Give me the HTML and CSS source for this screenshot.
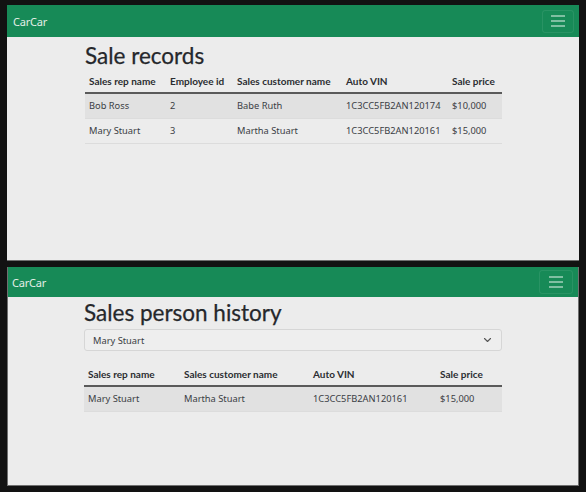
FILE: index.html
```html
<!DOCTYPE html>
<html lang="en">
<head>
<meta charset="utf-8">
<title>CarCar</title>
<link rel="stylesheet" href="styles.css">
</head>
<body>
<div class="shot shot-top">
  <nav class="navbar navbar-top">
    <span class="brand">CarCar</span>
    <button class="toggler" type="button" aria-label="Menu"><span class="bar"></span><span class="bar"></span><span class="bar"></span></button>
  </nav>
  <main class="content content-top">
    <h1 class="title">Sale records</h1>
    <table class="tbl tbl-top">
      <thead>
        <tr><th class="c1">Sales rep name</th><th class="c2">Employee id</th><th class="c3">Sales customer name</th><th class="c4">Auto VIN</th><th class="c5">Sale price</th></tr>
      </thead>
      <tbody>
        <tr class="odd"><td>Bob Ross</td><td>2</td><td>Babe Ruth</td><td>1C3CC5FB2AN120174</td><td>$10,000</td></tr>
        <tr><td>Mary Stuart</td><td>3</td><td>Martha Stuart</td><td>1C3CC5FB2AN120161</td><td>$15,000</td></tr>
      </tbody>
    </table>
  </main>
</div>
<div class="shot shot-bottom">
  <nav class="navbar navbar-bottom">
    <span class="brand">CarCar</span>
    <button class="toggler" type="button" aria-label="Menu"><span class="bar"></span><span class="bar"></span><span class="bar"></span></button>
  </nav>
  <main class="content content-bottom">
    <h1 class="title title-bottom">Sales person history</h1>
    <div class="select">
      <span>Mary Stuart</span>
      <svg class="chev" width="9" height="6" viewBox="0 0 9 6"><path d="M1.5 1.5 L4.5 4.5 L7.5 1.5" fill="none" stroke="#555" stroke-width="1.1" stroke-linecap="round" stroke-linejoin="round"/></svg>
    </div>
    <table class="tbl tbl-bottom">
      <thead>
        <tr><th class="d1">Sales rep name</th><th class="d2">Sales customer name</th><th class="d3">Auto VIN</th><th class="d4">Sale price</th></tr>
      </thead>
      <tbody>
        <tr class="odd"><td>Mary Stuart</td><td>Martha Stuart</td><td>1C3CC5FB2AN120161</td><td>$15,000</td></tr>
      </tbody>
    </table>
  </main>
</div>
</body>
</html>
```
FILE: styles.css
```css
* { box-sizing: border-box; }
html, body { margin: 0; padding: 0; }
body {
  background: #121212;
  width: 586px;
  height: 492px;
  overflow: hidden;
  display: flex;
  flex-direction: column;
  gap: 6px;
  padding-top: 5px;
  font-family: "Noto Sans", "Open Sans", sans-serif;
  color: #2d2f33;
}
.shot {
  margin-left: 7px;
  width: 572px;
  background: #ececec;
  border-bottom: 1px solid #6f6f6f;
  display: flex;
  flex-direction: column;
}
.shot-top { height: 256px; }
.shot-bottom { height: 219px; border-left: 1px solid #6f6f6f; border-right: 1px solid #6f6f6f; }
.navbar {
  background: #178a57;
  display: flex;
  align-items: center;
  justify-content: space-between;
  flex: none;
}
.navbar-top { height: 32px; padding: 0 5px 0 6px; }
.navbar-bottom { height: 30px; padding: 0 5px 0 4px; }
.brand {
  color: #e3eee7;
  font-size: 11px;
  letter-spacing: -0.2px;
}
.toggler {
  width: 32px;
  height: 23px;
  border: 1px solid rgba(255,255,255,0.08);
  border-radius: 3px;
  background: transparent;
  padding: 0;
  display: flex;
  flex-direction: column;
  align-items: center;
  justify-content: center;
  gap: 3px;
}
.navbar-bottom .toggler { width: 34px; height: 24px; }
.bar {
  display: block;
  width: 14px;
  height: 2px;
  background: rgba(255,255,255,0.45);
}
.content-top { padding: 4px 0 0 78px; }
.content-bottom { padding: 1px 0 0 76px; }
.title {
  margin: 0;
  font-family: Lato, "Noto Sans", sans-serif;
  font-weight: 400;
  font-size: 22.5px;
  line-height: 30px;
  color: #25272b;
  -webkit-text-stroke: 0.25px #25272b;
}
.title-bottom { margin-bottom: 1px; }
.tbl {
  border-collapse: collapse;
  font-size: 9.3px;
  table-layout: fixed;
}
.tbl-top { width: 417px; margin-top: -2px; }
.tbl-bottom { width: 418px; margin-top: 11px; }
.tbl th {
  text-align: left;
  font-family: Lato, "Noto Sans", sans-serif;
  font-size: 10px;
  font-weight: 700;
  padding: 0 4px;
  height: 24px;
  border-bottom: 2px solid #5a5a5a;
  color: #2b2d31;
  white-space: nowrap;
}
.tbl td {
  padding: 0 4px;
  height: 25px;
  border-bottom: 1px solid #dcdcdc;
  color: #3a3d44;
  white-space: nowrap;
}
.tbl tr.odd td { background: #e1e1e1; }
.c1 { width: 81px; }
.c2 { width: 67px; }
.c3 { width: 109px; }
.c4 { width: 106px; }
.c5 { width: 54px; }
.d1 { width: 96px; }
.d2 { width: 129px; }
.d3 { width: 127px; }
.d4 { width: 66px; }
.select {
  width: 418px;
  height: 22px;
  border: 1px solid #d6d6d6;
  border-radius: 3px;
  background: #eeeeee;
  display: flex;
  align-items: center;
  justify-content: space-between;
  padding: 0 9px 0 8px;
  font-size: 9.3px;
  color: #3a3d44;
}
.chev { display: block; }
```
